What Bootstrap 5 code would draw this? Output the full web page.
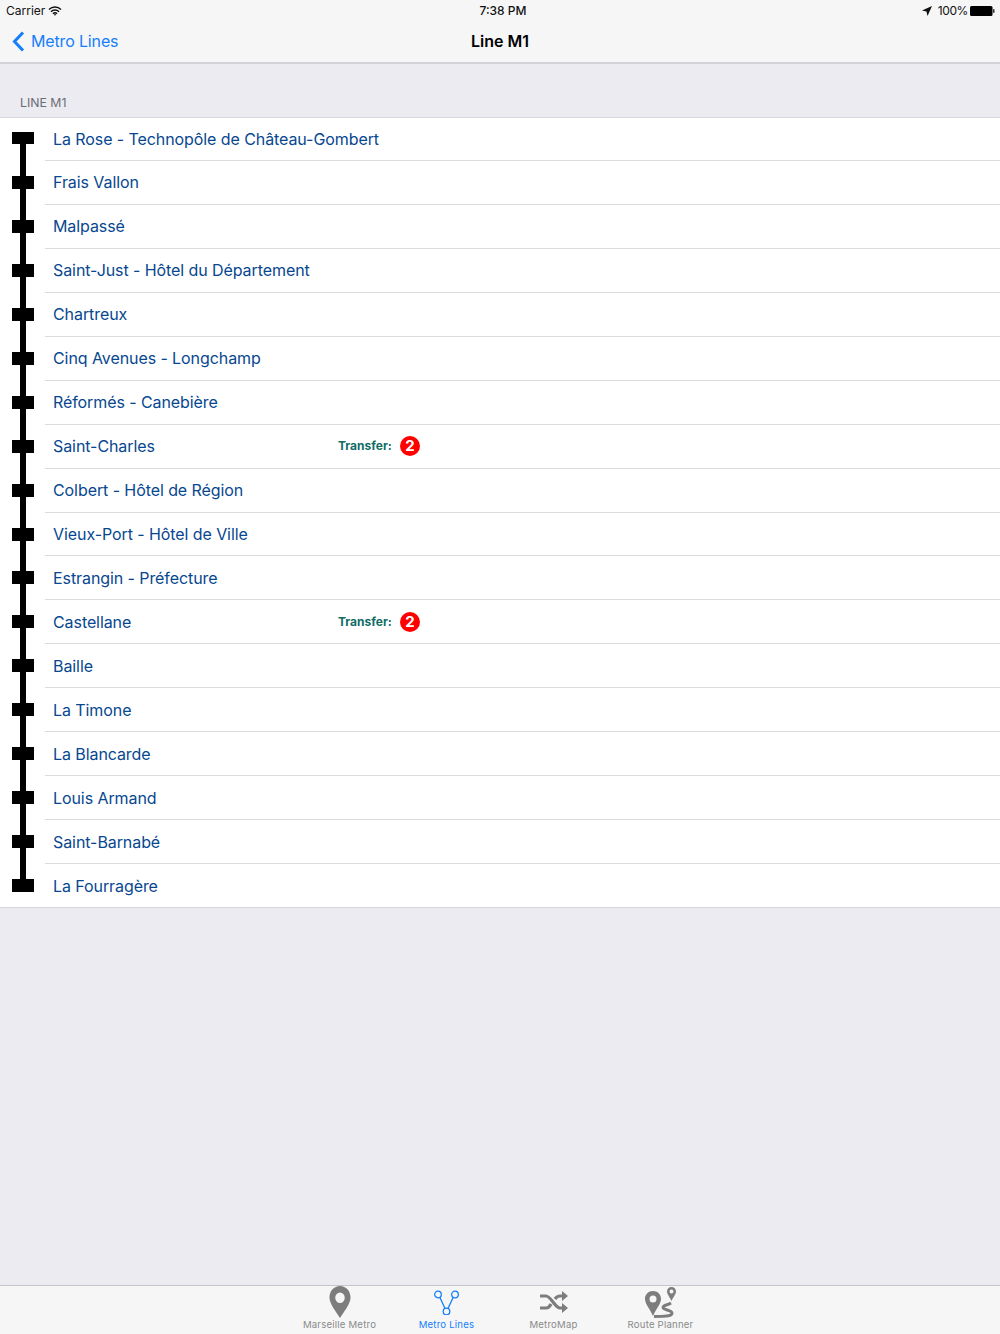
<!DOCTYPE html>
<html lang="en">
<head>
  <meta charset="UTF-8" />
  <title>Line M1</title>
  <link rel="stylesheet" href="https://cdn.jsdelivr.net/npm/bootstrap@5.3.0/dist/css/bootstrap.min.css"/>
  <style>
    html, body { height: 100%; }
    body {
      background-color: #ebebf1;
      font-family: Inter, "Liberation Sans", sans-serif;
      overflow: hidden;
    }
    .app-screen { height: 1334px; }
    .top-bar {
      height: 64px;
      background-color: #f6f6f7;
      border-bottom: 2px solid #d3d3d7;
    }
    .status-row { height: 21px; font-size: 12px; color: #111; padding: 0 5px 0 6px; }
    .status-col { flex: 1 1 0; }
    .status-left { gap: 3px; }
    .status-mid { padding-left: 5px; }
    .loc-arrow { margin-right: 6px; }
    .batt-pct { letter-spacing: -.4px; }
    .batt-icon { margin-left: 2px; }
    .nav-row { height: 40px; }
    .back-link { color: #157efb; font-size: 16px; letter-spacing: -.15px; padding-left: 12px; gap: 6px; text-decoration: none; }
    .nav-title { font-size: 16px; font-weight: 600; color: #000; left: 0; right: 0; top: 0; line-height: 40px; }
    .section-label { height: 53px; padding: 0 20px 5px; font-size: 12.3px; color: #6d6d72; }
    .stop-list { background: #fff; border-top: 1px solid #d8d8dc; border-bottom: 1px solid #d8d8dc; }
    .stop-row { height: 43.94px; }
    .stop-row:first-child, .stop-row:last-child { height: 43px; }
    .rail-cell { width: 45px; flex: none; position: relative; }
    .rail-line { position: absolute; left: 20px; width: 6px; top: 0; bottom: 0; background: #000; }
    .stop-row:first-child .rail-line { top: 15px; }
    .stop-row:last-child .rail-line { bottom: 22px; }
    .rail-stop { position: absolute; left: 12px; width: 21.5px; height: 13px; top: 15px; background: #000; }
    .stop-row:first-child .rail-stop { top: 14px; height: 12px; }
    .stop-body {
      flex: 1;
      border-bottom: 1px solid #dcdcdf;
      padding-left: 8px;
      font-size: 16px;
      color: #07478f;
    }
    .stop-row:last-child .stop-body { border-bottom: 0; }
    .stop-name { width: 285px; flex: none; letter-spacing: -.08px; }
    .transfer-text { font-size: 12px; font-weight: 700; color: #0f6b66; width: 62px; }
    .line-dot {
      width: 20px; height: 20px; border-radius: 50%;
      background: #f00; color: #fff; font-size: 15px; font-weight: 700;
    }
    .tab-bar {
      height: 49px;
      background-color: #f6f6f7;
      border-top: 1px solid #c6c6ca;
    }
    .tab-item { width: 107px; color: #8a8a8a; font-size: 9.6px; letter-spacing: .2px; }
    .tab-item.on { color: #157efb; }
    .tab-icon { height: 32px; }
  </style>
</head>
<body>
<div class="app-screen d-flex flex-column">

  <header class="top-bar flex-shrink-0">
    <div class="status-row d-flex align-items-center">
      <div class="status-col status-left d-flex align-items-center">
        Carrier
        <svg width="14" height="10" viewBox="0 0 14 10" fill="none" stroke="#111" stroke-width="1.5">
          <path d="M1 3.5a8.5 8.5 0 0 1 12 0M3 5.7a5.6 5.6 0 0 1 8 0M5 7.7a2.8 2.8 0 0 1 4 0"/>
          <path d="M7 9.8 5.8 8.5a1.8 1.8 0 0 1 2.4 0z" fill="#111" stroke="none"/>
        </svg>
      </div>
      <div class="status-col status-mid text-center fw-medium">7:38 PM</div>
      <div class="status-col d-flex align-items-center justify-content-end">
        <svg class="loc-arrow" width="10" height="10" viewBox="0 0 9 9"><path d="M9 0 0 4l4 1 1 4z" fill="#111"/></svg>
        <span class="batt-pct">100%</span>
        <svg class="batt-icon" width="25" height="10" viewBox="0 0 25 10">
          <rect x="0" y="0" width="22.500" height="10" rx="1.500" fill="#000"/>
          <rect x="23" y="3.200" width="1.500" height="3.600" fill="#333"/>
        </svg>
      </div>
    </div>
    <div class="nav-row position-relative">
      <div class="nav-title position-absolute text-center">Line M1</div>
      <a href="#" class="back-link d-inline-flex align-items-center h-100 position-relative">
        <svg width="13" height="21" viewBox="0 0 13 21" fill="none" stroke="#157efb" stroke-width="3">
          <path d="M11 1.5 2.5 10.5 11 19.5"/>
        </svg>
        Metro Lines
      </a>
    </div>
  </header>

  <div class="section-label d-flex align-items-end flex-shrink-0">LINE M1</div>

  <div class="stop-list flex-shrink-0" id="stops"></div>

  <div class="flex-grow-1"></div>

  <nav class="tab-bar d-flex justify-content-center flex-shrink-0">
    <div class="tab-item d-flex flex-column align-items-center">
      <div class="tab-icon d-flex align-items-center">
        <svg width="22" height="32" viewBox="0 0 24 32" preserveAspectRatio="none">
          <path fill="#7d7d7d" fill-rule="evenodd" d="M12 0C5.4 0 .5 5 .5 11.5 .5 18 8 26 12 32c4-6 11.500-14 11.500-20.500C23.500 5 18.600 0 12 0zm0 6.500a5.200 5.200 0 1 1 0 10.400 5.200 5.200 0 0 1 0-10.400z"/>
        </svg>
      </div>
      <span>Marseille Metro</span>
    </div>
    <div class="tab-item on d-flex flex-column align-items-center">
      <div class="tab-icon d-flex align-items-center">
        <svg width="27" height="26" viewBox="0 0 27 26" fill="none" stroke="#157efb" stroke-width="1.300">
          <circle cx="5" cy="5.500" r="3.300"/><circle cx="22" cy="5.500" r="3.300"/><circle cx="13.500" cy="22.500" r="3.300"/>
          <path d="M6.800 8.300 12 19.500M20.200 8.300 15 19.500"/>
        </svg>
      </div>
      <span>Metro Lines</span>
    </div>
    <div class="tab-item d-flex flex-column align-items-center">
      <div class="tab-icon d-flex align-items-center">
        <svg width="28" height="22" viewBox="0 0 28 22" fill="none" stroke="#7d7d7d" stroke-width="3.200">
          <path d="M0 5h6c5 0 9 12 14 12h3M0 17h6c2 0 4-2 5-4M15 8c1-1.500 3-3 5-3h3"/>
          <path d="M22 0l6 5-6 5zM22 12l6 5-6 5z" fill="#7d7d7d" stroke="none"/>
        </svg>
      </div>
      <span>MetroMap</span>
    </div>
    <div class="tab-item d-flex flex-column align-items-center">
      <div class="tab-icon d-flex align-items-center">
        <svg width="33" height="33" viewBox="0 0 33 33">
          <path fill="#7d7d7d" fill-rule="evenodd" d="M9 5c-4.600 0-8 3.400-8 8 0 4.800 5 10 8 17 3-7 8-12.200 8-17 0-4.600-3.400-8-8-8zm0 4.500a3.500 3.500 0 1 1 0 7 3.500 3.500 0 0 1 0-7z"/>
          <path fill="#7d7d7d" fill-rule="evenodd" d="M27.500 1c-2.600 0-4.500 2-4.500 4.500 0 2.500 2.800 5.500 4.500 9.500 1.700-4 4.500-7 4.500-9.500C32 3 30.100 1 27.500 1zm0 2.500a2 2 0 1 1 0 4 2 2 0 0 1 0-4z"/>
          <path fill="none" stroke="#7d7d7d" stroke-width="3" d="M27 17c-3 2-8 2-8 4.500 0 2.500 9 2.500 9 5.500 0 3-4 3.500-18 3.500"/>
        </svg>
      </div>
      <span>Route Planner</span>
    </div>
  </nav>
</div>

<script>
// stops of line M1, transfer = line number you can change to
const stops = [
  ['La Rose - Technopôle de Château-Gombert'], ['Frais Vallon'], ['Malpassé'],
  ['Saint-Just - Hôtel du Département'], ['Chartreux'], ['Cinq Avenues - Longchamp'],
  ['Réformés - Canebière'], ['Saint-Charles', 2], ['Colbert - Hôtel de Région'],
  ['Vieux-Port - Hôtel de Ville'], ['Estrangin - Préfecture'], ['Castellane', 2],
  ['Baille'], ['La Timone'], ['La Blancarde'], ['Louis Armand'], ['Saint-Barnabé'], ['La Fourragère']
];
document.getElementById('stops').innerHTML = stops.map(([name, line]) => `
  <div class="stop-row d-flex">
    <div class="rail-cell"><div class="rail-line"></div><div class="rail-stop"></div></div>
    <div class="stop-body d-flex align-items-center">
      <span class="stop-name text-nowrap">${name}</span>
      ${line ? `<span class="transfer-text">Transfer:</span><span class="line-dot d-flex align-items-center justify-content-center">${line}</span>` : ''}
    </div>
  </div>`).join('');
</script>
<script src="https://cdn.jsdelivr.net/npm/bootstrap@5.3.0/dist/js/bootstrap.bundle.min.js"></script>
</body>
</html>
